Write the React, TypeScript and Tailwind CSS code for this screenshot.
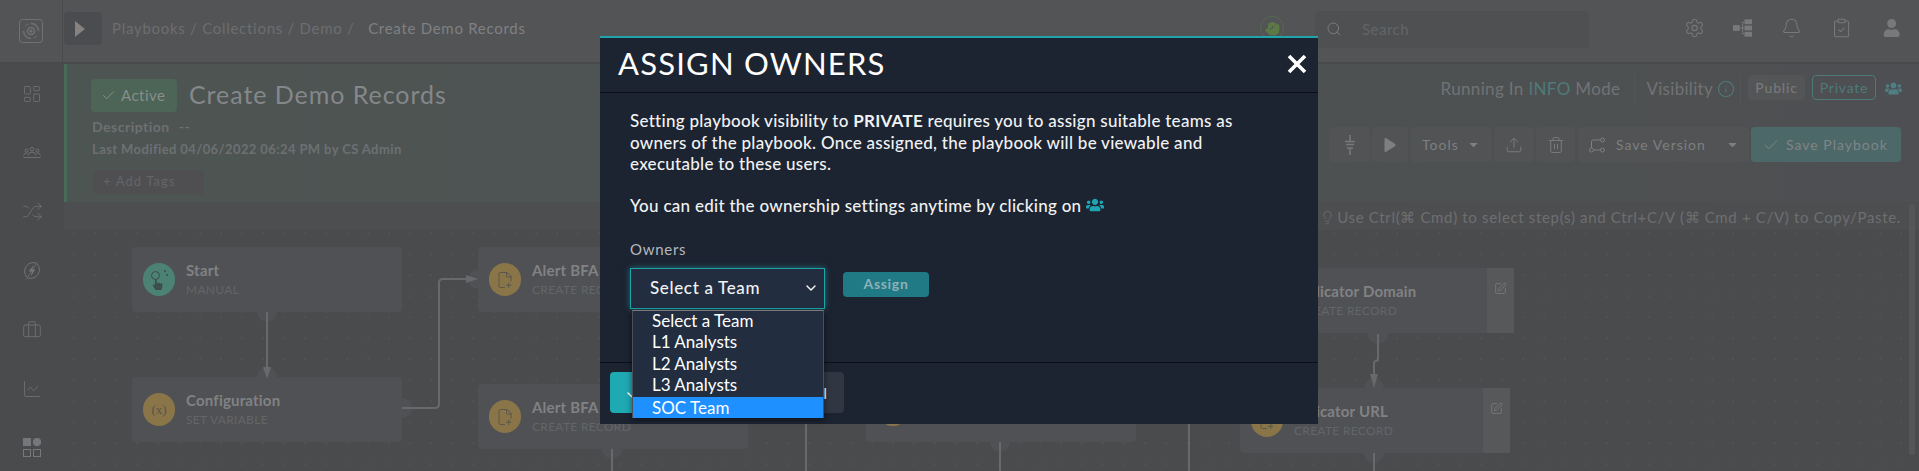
import { Check, ChevronDown, Search, Settings, Bell, ClipboardCheck, Upload, Trash2, Lightbulb, Info, LayoutDashboard, Shuffle, Briefcase, LineChart, FilePlus2, Hand, SquarePen } from 'lucide-react';
import { FaUser, FaUsers, FaPlay, FaCaretDown, FaHandPointer } from 'react-icons/fa';

function TreeIcon() {
  return (
    <svg width="20" height="18" viewBox="0 0 20 18" fill="#77797b">
      <rect x="0" y="6" width="7" height="6" />
      <rect x="12" y="0" width="8" height="5" />
      <rect x="12" y="6.500" width="8" height="5" />
      <rect x="12" y="13" width="8" height="5" />
      <path d="M7 8.500h2.500V2.500H12v1H10.500v5H12v1h-1.500v5H12v1H9.500V9.500H7z" />
    </svg>
  );
}

function LogoIcon() {
  return (
    <svg width="24" height="24" viewBox="0 0 24 24" fill="none" stroke="#6f7173" strokeWidth="1">
      <rect x="0.500" y="0.500" width="23" height="23" rx="3" />
      <path d="M12 4.500a7.500 7.500 0 0 1 7.500 7.500M12 19.500A7.500 7.500 0 0 1 4.500 12" strokeWidth="1.500" />
      <path d="M6 7.500A7.500 7.500 0 0 1 9.500 5M18 16.500A7.500 7.500 0 0 1 14.500 19" />
      <circle cx="12" cy="12" r="3.500" strokeWidth="1.500" />
      <circle cx="12" cy="12" r="1.200" fill="#6f7173" />
    </svg>
  );
}

function TeamIcon() {
  return (
    <svg width="18" height="11" viewBox="0 0 18 11" fill="none" stroke="#727476" strokeWidth="0.900">
      <circle cx="9" cy="2.200" r="1.800" />
      <circle cx="3.500" cy="3.500" r="1.500" />
      <circle cx="14.500" cy="3.500" r="1.500" />
      <path d="M5.500 8.500Q5.500 5 9 5t3.500 3.500M0.500 8.500Q0.500 6 3.500 6q1 0 1.500.5M17.500 8.500Q17.500 6 14.500 6q-1 0-1.500.5M0.500 10.500h17" />
    </svg>
  );
}

function BoltCircleIcon() {
  return (
    <svg width="18" height="19" viewBox="0 0 18 19" fill="none" stroke="#727476">
      <path d="M13 2.200A8.500 8.500 0 0 0 4 16M5 16.800A8.500 8.500 0 0 0 14 3" />
      <path d="M11 3.500L5.500 10.500H9L7.500 15.500L12.500 8.500H9.200z" fill="#727476" stroke="none" />
      <path d="M15 0.500L3 18.500" strokeWidth="0.700" />
    </svg>
  );
}

function AppsIcon() {
  return (
    <svg width="18" height="19" viewBox="0 0 18 19" fill="none" stroke="#75777a">
      <rect x="0.500" y="0.500" width="7" height="7" fill="#75777a" />
      <circle cx="14" cy="4" r="3.800" fill="#75777a" />
      <rect x="0.500" y="11.500" width="7" height="7" />
      <rect x="10.500" y="11.500" width="7" height="7" />
    </svg>
  );
}

const sideIcons = [
  <LayoutDashboard key="a" size={20} strokeWidth={1} />,
  <TeamIcon key="b" />,
  <Shuffle key="c" size={21} strokeWidth={0.9} />,
  <BoltCircleIcon key="d" />,
  <Briefcase key="e" size={20} strokeWidth={1} />,
  <LineChart key="f" size={20} strokeWidth={1} />,
  <AppsIcon key="g" />,
];

function TopBar() {
  return (
    <div className="flex h-[64px] items-stretch border-b-2 border-[#48494b] bg-[#535456]">
      <div className="flex w-[63px] items-center justify-center border-r border-[#4a4b4d]">
        <LogoIcon />
      </div>
      <div className="mt-[12px] ml-px flex h-[33px] w-[38px] items-center justify-center rounded-sm bg-[#4b4c4f]">
        <svg width="10" height="16" viewBox="0 0 10 16" fill="#85827f" className="mr-[6px]"><path d="M0 0l10 8-10 8z" /></svg>
      </div>
      <div className="ml-[10px] flex h-[56px] items-center text-[15px] tracking-[0.72px] whitespace-pre text-[#6c6e70]">
        Playbooks / Collections / Demo / <span className="ml-[9px] text-[#7f8183]">Create Demo Records</span>
      </div>
      <div className="ml-auto flex items-center">
        <div className="mr-[31px] mb-[6px] flex h-[24px] w-[24px] items-center justify-center rounded-full border border-[#56694d] text-[#5d7a46]">
          <Hand size={15} fill="#5d7a46" />
        </div>
        <div className="mb-[4px] flex h-[37px] w-[274px] items-center rounded-sm bg-[#4f5052] pl-[11px] text-[#6f7173]">
          <Search size={16} strokeWidth={1.5} className="text-[#7a7c7e]" />
          <span className="ml-[20px] text-[15px] tracking-[0.5px] text-[#636567]">Search</span>
        </div>
        <div className="mr-[19px] mb-[6px] ml-[95px] flex w-[216px] items-center gap-[28px] text-[#77797b]">
          <Settings size={22} strokeWidth={1.2} />
          <TreeIcon />
          <Bell size={22} strokeWidth={1.2} className="ml-[1px]" />
          <ClipboardCheck size={22} strokeWidth={1.2} />
          <FaUser size={18} className="ml-[3px]" />
        </div>
      </div>
    </div>
  );
}

function ToolButton({ children, className }: { children: React.ReactNode; className: string }) {
  return (
    <div className={`flex h-[35px] items-center rounded-sm bg-[#525355] text-[14px] tracking-[1px] text-[#7d7f81] ${className}`}>
      {children}
    </div>
  );
}

function PlaybookHeader() {
  return (
    <div className="flex h-[138px] border-l-[3px] border-[#4a6a58] bg-gradient-to-r from-[#4d5553] via-[#4d5251] to-[#4e4f52]">
      <div className="pt-[15px] pl-[24px]">
        <div className="flex items-center">
          <div className="flex h-[33px] w-[86px] items-center rounded-sm bg-[#4c6556] pl-[10px] text-[15px] tracking-[0.5px] text-[#8a8d8c]">
            <Check size={15} strokeWidth={1.5} className="mr-[5px]" />
            Active
          </div>
          <span className="-mt-[3px] ml-[12px] text-[25px] leading-[33px] tracking-[0.95px] text-[#85878a]">Create Demo Records</span>
        </div>
        <div className="mt-[6px] ml-px text-[14px] leading-[18px] font-bold tracking-[0.5px] text-[#6d7072]">
          Description <span className="ml-[5px]">--</span>
        </div>
        <div className="mt-[4px] ml-px text-[13px] leading-[18px] font-bold tracking-[0.4px] text-[#6d7072]">
          Last Modified 04/06/2022 06:24 PM by CS Admin
        </div>
        <div className="mt-[12px] ml-[2px] flex h-[24px] w-[111px] items-center rounded-sm bg-[#4f4f52] pl-[10px] text-[13px] tracking-[1.1px] text-[#636567]">
          + Add Tags
        </div>
      </div>
      <div className="ml-auto flex flex-col items-end pr-[18px]">
        <div className="mt-[12px] flex h-[25px] items-center text-[17px] text-[#717375]">
          <span className="mr-[14px] tracking-[0.35px]">
            Running In <span className="text-[#4f7a7a]">INFO</span> Mode
          </span>
          <span className="mr-[11px] h-[32px] w-px bg-[#545557]" />
          <span className="tracking-[0.3px]">Visibility</span>
          <Info size={18} strokeWidth={1.5} className="mr-[5px] ml-[4px] text-[#4f7a7a]" />
          <span className="mr-[7px] h-[32px] w-px bg-[#545557]" />
          <div className="mr-[7px] mb-[3px] flex h-[25px] w-[57px] items-center justify-center rounded-sm bg-[#545557] text-[14px] font-medium tracking-[0.8px] text-[#77797b]">Public</div>
          <div className="mr-[9px] mb-[3px] flex h-[25px] w-[64px] items-center justify-center rounded-sm border border-[#4d7a78] text-[14px] tracking-[0.8px] text-[#4f7a7a]">Private</div>
          <FaUsers size={17} className="-mr-[1px] text-[#4f7f85]" />
        </div>
        <div className="mt-[26px] flex gap-[2px]">
          <ToolButton className="w-[41px] justify-center"><svg width="12" height="20" viewBox="0 0 12 20" fill="none" stroke="#77797b" strokeWidth="1.500"><path d="M6 0v6M1 6.500h10M2 9.500h8M3 13h6M6 13v7" /></svg></ToolButton>
          <ToolButton className="w-[36px] justify-center"><FaPlay size={14} className="scale-x-90 text-[#7d7f81]" /></ToolButton>
          <ToolButton className="ml-[1px] w-[81px] pl-[11px]">Tools<FaCaretDown size={13} className="ml-[8px]" /></ToolButton>
          <ToolButton className="w-[40px] justify-center"><Upload size={18} strokeWidth={1.2} /></ToolButton>
          <ToolButton className="w-[39px] justify-center"><Trash2 size={18} strokeWidth={1.2} /></ToolButton>
          <ToolButton className="ml-[1px] w-[171px] pl-[11px]">
            <svg width="16" height="16" viewBox="0 0 16 16" fill="none" stroke="#7d7f81"><circle cx="2.500" cy="13" r="2" /><circle cx="13.500" cy="13" r="2" /><circle cx="13.500" cy="3" r="2" /><path d="M4.500 13h7M11.500 3H4Q2.500 3 2.500 5v6" /></svg>
            <span className="ml-[11px]">Save Version</span>
            <FaCaretDown size={13} className="ml-[20px]" />
          </ToolButton>
          <div className="flex h-[35px] w-[150px] items-center rounded-sm bg-[#4c6868] pl-[11px] text-[14px] tracking-[1px] text-[#808586]">
            <Check size={18} strokeWidth={1.3} className="mr-[6px]" />
            Save Playbook
          </div>
        </div>
      </div>
    </div>
  );
}

function FlowNode({ title, sub, icon, color, className, edit }: { title: string; sub: string; icon: React.ReactNode; color: string; className: string; edit?: boolean }) {
  return (
    <div className={`absolute flex h-[65px] w-[270px] items-center rounded-sm bg-[#505154] pl-[11px] ${className}`}>
      <div className={`flex h-[33px] w-[32px] items-center justify-center rounded-full ${color}`}>{icon}</div>
      <div className="-mt-[1px] ml-[11px]">
        <div className="text-[15px] font-bold tracking-[0.2px] text-[#808284]">{title}</div>
        <div className="text-[12px] tracking-[0.3px] text-[#636568]">{sub}</div>
      </div>
      {edit && (
        <div className="ml-auto flex h-full w-[27px] justify-center bg-[#57585a] pt-[14px]">
          <SquarePen size={13} strokeWidth={1.5} className="text-[#7b7d7f]" />
        </div>
      )}
    </div>
  );
}

const recordIcon = <FilePlus2 size={18} strokeWidth={1.2} className="text-[#55544f]" />;

const startIcon = (
  <div className="relative h-[20px] w-[18px]">
    <span className="absolute top-[1px] left-[1px] h-[9px] w-[9px] rounded-full border border-[#3d4b49]" />
    <span className="absolute top-0 right-[2px] h-[2px] w-[2px] rounded-full bg-[#3d4b49]" />
    <span className="absolute top-[4px] right-0 h-[2px] w-[2px] rounded-full bg-[#3d4b49]" />
    <FaHandPointer size={11} className="absolute bottom-0 left-[2px] text-[#3d4b49]" />
  </div>
);

function Canvas() {
  return (
    <div className="relative flex-1 overflow-hidden bg-[#4a4b4d] bg-[radial-gradient(#525356_1px,transparent_1px)] bg-[length:21px_21px]">
      <div className="flex h-[28px] items-center justify-end bg-[#4d4e50] pt-[2px] pr-[18px] text-[15px] tracking-[0.66px] text-[#6d6f71]">
        <Lightbulb size={15} strokeWidth={1.3} className="mr-[2px]" />
        Use Ctrl(⌘ Cmd) to select step(s) and Ctrl+C/V (⌘ Cmd + C/V) to Copy/Paste.
      </div>
      <FlowNode className="top-[45px] left-[68px]" title="Start" sub="MANUAL" color="bg-[#4b8274]" icon={startIcon} />
      <FlowNode className="top-[175px] left-[68px]" title="Configuration" sub="SET VARIABLE" color="bg-[#8a7548]" icon={<span className="font-['Liberation_Serif',serif] text-[13px] text-[#55544f]">(x)</span>} />
      <FlowNode className="top-[45px] left-[414px]" title="Alert BFA" sub="CREATE RECORD" color="bg-[#8a7548]" icon={recordIcon} />
      <FlowNode className="top-[182px] left-[414px]" title="Alert BFA" sub="CREATE RECORD" color="bg-[#8a7548]" icon={recordIcon} />
      <FlowNode className="top-[175px] left-[802px]" title="Alert BFA" sub="CREATE RECORD" color="bg-[#8a7548]" icon={recordIcon} />
      <FlowNode className="top-[66px] left-[1180px]" title="Indicator Domain" sub="CREATE RECORD" color="bg-[#8a7548]" icon={recordIcon} edit />
      <FlowNode className="top-[186px] left-[1176px]" title="Indicator URL" sub="CREATE RECORD" color="bg-[#8a7548]" icon={recordIcon} edit />
      <svg className="absolute top-0 left-0" width="1855" height="269" fill="none" stroke="#68696b" strokeWidth="2">
        <g fill="#505154" stroke="none">
          <circle cx="203" cy="110" r="10" />
          <circle cx="203" cy="175" r="10" />
          <circle cx="338" cy="206" r="10" />
          <circle cx="414" cy="77" r="10" />
          <circle cx="548" cy="247" r="10" />
          <circle cx="936" cy="240" r="10" />
          <circle cx="1314" cy="132" r="10" />
          <circle cx="1310" cy="186" r="10" />
          <circle cx="1310" cy="251" r="10" />
        </g>
        <path d="M203 110V168" />
        <path d="M203 177l-4-12h8z" fill="#68696b" stroke="none" />
        <path d="M338 206h33q4 0 4-4V81q0-4 4-4h26" />
        <path d="M414 77l-12-4v8z" fill="#68696b" stroke="none" />
        <path d="M548 247v22M742 222v47M936 240v29M1125 222v47M1310 251v18" />
        <path d="M1314 132v25q0 2-2 2t-2 2v17" />
        <path d="M1310 186l-4-14h8z" fill="#68696b" stroke="none" />
      </svg>
      <div className="absolute top-[2px] right-[4px] h-[251px] w-[6px] rounded-full bg-[#555658]" />
    </div>
  );
}

function AssignOwnersModal() {
  const teams = ['Select a Team', 'L1 Analysts', 'L2 Analysts', 'L3 Analysts', 'SOC Team'];
  return (
    <div className="absolute top-[36px] left-[600px] flex h-[388px] w-[718px] flex-col border-t-2 border-[#1fa4ac] bg-[#1c2331] text-white">
      <div className="flex h-[55px] shrink-0 items-center justify-between border-b border-[#0b0f17] pr-[11px] pb-[3px] pl-[18px]">
        <span className="text-[31px] leading-none tracking-[1.2px]">ASSIGN OWNERS</span>
        <svg width="20" height="20" viewBox="0 0 20 20" stroke="#fff" strokeWidth="3.600"><path d="M2 2l16 16M18 2L2 18" /></svg>
      </div>
      <div className="relative h-[270px] shrink-0 border-b border-[#0b0f17] pt-[17px] pl-[30px] text-[17px] leading-[21.500px] font-medium tracking-[0.27px] text-[#f1f2f3]">
        <p className="w-[640px]">
          Setting playbook visibility to <b>PRIVATE</b> requires you to assign suitable teams as<br />
          owners of the playbook. Once assigned, the playbook will be viewable and<br />
          executable to these users.
        </p>
        <p className="mt-[20px] flex items-center">
          You can edit the ownership settings anytime by clicking on
          <FaUsers size={18} className="ml-[5px] text-[#1fa4b4]" />
        </p>
        <div className="mt-[23px] text-[15px] font-normal tracking-[0.7px] text-[#b5b8bc]">Owners</div>
        <div className="mt-[7px] flex items-start">
          <div className="flex h-[41px] w-[195px] items-center border border-[#1fa4ac] bg-[#222e40] pr-[5px] pl-[19px] text-[17px] font-medium tracking-[0.65px] shadow-[0_0_6px_rgba(31,164,172,0.6)]">
            Select a Team
            <ChevronDown size={16} strokeWidth={2.2} className="ml-auto" />
          </div>
          <div className="mt-[4px] ml-[18px] flex h-[25px] w-[86px] items-center justify-center rounded-sm bg-[#1f7a85] text-[14px] font-bold tracking-[0.7px] text-[#8fb0b5]">Assign</div>
        </div>
      </div>
      <div className="flex items-start pt-[9px] pl-[10px]">
        <div className="flex h-[41px] w-[106px] items-center rounded-sm bg-[#1fa9b3] pl-[15px]">
          <Check size={18} />
        </div>
        <div className="flex h-[41px] w-[128px] items-center justify-end rounded-sm bg-[#303642] pr-[15px] text-[16px] tracking-[2px]">Cancel</div>
      </div>
      <ul className="absolute top-[272px] left-[32px] w-[192px] border-x border-t border-x-[#4a4f58] border-t-[#7b7b7b] bg-[#222e40] text-[17px] leading-[21.400px] shadow-[0_2px_6px_rgba(0,0,0,0.5)]">
        {teams.map((team) => (
          <li key={team} className={`-translate-y-px pl-[19px] ${team === 'SOC Team' ? 'translate-y-0 bg-[#1e90ff]' : ''}`}>{team}</li>
        ))}
      </ul>
    </div>
  );
}

export default function App() {
  return (
    <div className="relative h-[471px] w-[1919px] overflow-hidden bg-[#4a4b4d] font-['Lato',sans-serif]">
      <TopBar />
      <div className="flex h-[407px]">
        <div className="flex w-[64px] shrink-0 flex-col items-center text-[#727476]">
          {sideIcons.map((icon) => (
            <div key={icon.key} className="flex h-[59px] shrink-0 items-center justify-center">{icon}</div>
          ))}
        </div>
        <div className="flex min-w-0 flex-1 flex-col">
          <PlaybookHeader />
          <Canvas />
        </div>
      </div>
      <AssignOwnersModal />
    </div>
  );
}
